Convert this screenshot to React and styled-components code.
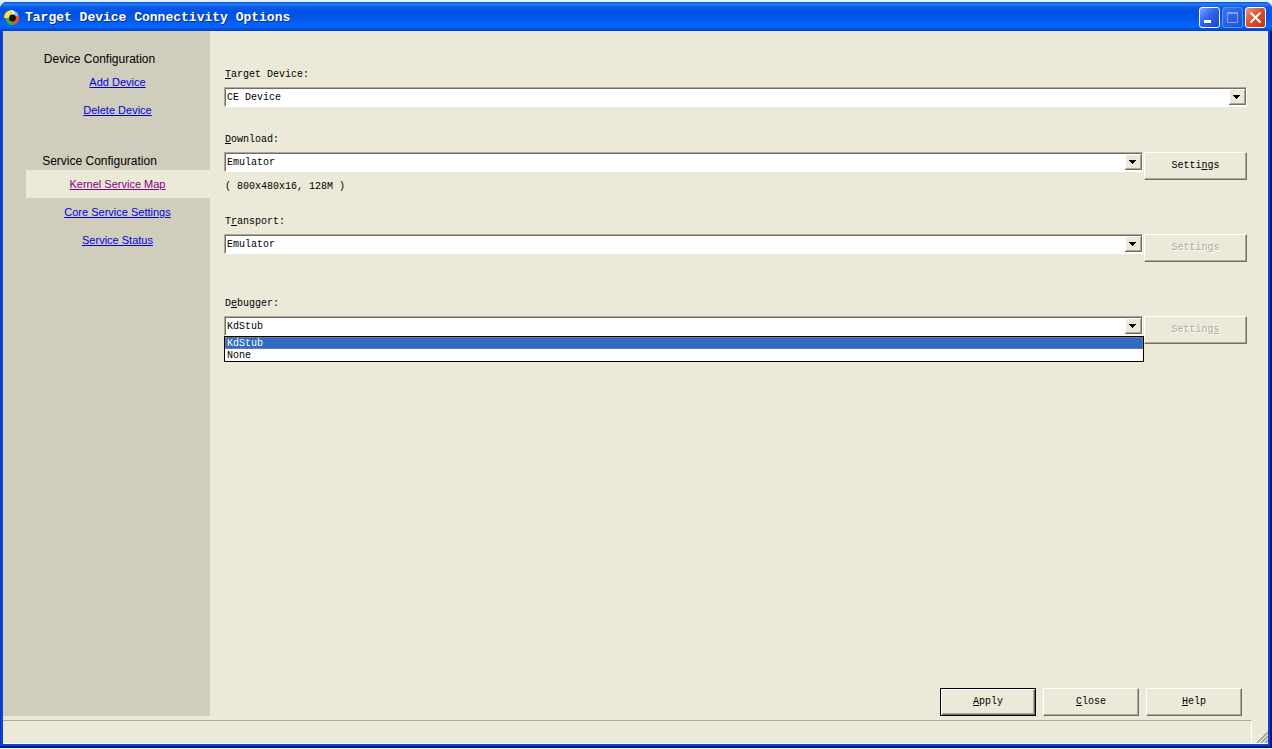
import React, { useState } from "react";
import styled, { createGlobalStyle, css } from "styled-components";

const face = "#ece9d8";
const mono = '"Liberation Mono", "DejaVu Sans Mono", monospace';
const sans = '"Liberation Sans", Arial, sans-serif';

const GlobalStyle = createGlobalStyle`
  * { box-sizing: border-box; }
  body { margin: 0; background: #dff3fb; }
`;

const Desktop = styled.div`
  display: flex;
  min-height: 100vh;
  padding: 2px 0 1px;
`;

const Window = styled.section`
  flex: 1;
  display: flex;
  flex-direction: column;
  padding: 0 4px 4px 3px;
  border-radius: 7px 7px 0 0;
  background: #0b46d6;
  box-shadow: inset -2px -2px 0 #001590, inset 1px 0 0 #0a35c4;
`;

const TitleBar = styled.header`
  display: flex;
  align-items: center;
  height: 29px;
  margin: 0 -4px 0 -3px;
  padding: 2px 6px 0 4px;
  border-radius: 7px 7px 0 0;
  background: linear-gradient(
    #0a46c8 0, #2b82f8 2px, #0a5cee 5px, #0052e2 9px,
    #0054e6 15px, #0362fc 22px, #0266ff 25px, #0450da 27px, #0340be 29px
  );
`;

const Title = styled.h1`
  flex: 1;
  margin: 0 0 0 5px;
  font: bold 13px/16px ${mono};
  color: #fff;
  text-shadow: 1px 1px 0 #0a2a80;
`;

const Caption = styled.div`
  display: flex;
  gap: 2px;
`;

const CaptionButton = styled.button`
  display: block;
  width: 21px;
  height: 21px;
  padding: 0;
  border: 1px solid ${(p) => (p.disabled ? "#5f92f0" : "#fff")};
  border-radius: 3px;
  background: ${(p) =>
    p.$danger
      ? "linear-gradient(135deg, #ec9a80, #dd5130 45%, #b93510)"
      : p.disabled
        ? "linear-gradient(135deg, #3c74ea, #1c50d8)"
        : "linear-gradient(135deg, #7da2f5, #2f66ea 45%, #1746cc)"};
  svg { display: block; }
`;

const Body = styled.div`
  flex: 1;
  display: flex;
  padding-bottom: 4px;
  background: ${face};
`;

const Sidebar = styled.nav`
  width: 207px;
  padding: 19px 0 0 23px;
  background: #d1cdbc;
  font-family: ${sans};
`;

const Group = styled.div`
  margin-bottom: 28px;
`;

const GroupTitle = styled.h2`
  margin: 0;
  padding-right: 37px;
  font-size: 12px;
  font-weight: normal;
  line-height: 18px;
  text-align: center;
`;

const NavLink = styled.a`
  display: block;
  height: 28px;
  padding-right: 1px;
  font-size: 11px;
  line-height: 28px;
  text-align: center;
  color: ${(p) => (p.$active ? "#800080" : "#0000e0")};
  background: ${(p) => (p.$active ? face : "transparent")};
`;

const Main = styled.main`
  flex: 1;
  display: flex;
  flex-direction: column;
  justify-content: space-between;
  padding: 37px 21px 0 14px;
  font: 10px/14px ${mono};
  color: #000;
`;

const Field = styled.div`
  min-height: ${(p) => (p.$compact ? 65 : 82)}px;
`;

const Label = styled.label`
  display: block;
  width: max-content;
  margin: 0 0 5px 1px;
`;

const Row = styled.div`
  display: flex;
  align-items: flex-start;
  gap: 1px;
`;

const Control = styled.div`
  position: relative;
  flex: 1;
`;

const SelectFrame = styled.div`
  display: flex;
  height: 20px;
  border: 1px solid;
  border-color: #aca899 #fff #fff #aca899;
  box-shadow: inset 1px 1px 0 #716f64;
  background: #fff;
`;

const Select = styled.select`
  flex: 1;
  appearance: none;
  padding: 2px 20px 0 2px;
  border: 0;
  outline: 0;
  background: transparent;
  font: inherit;
  color: #000;
`;

const Arrow = styled.svg`
  position: absolute;
  top: 2px;
  right: 1px;
  pointer-events: none;
`;

const Note = styled.p`
  margin: 8px 0 0 1px;
`;

const Options = styled.ul`
  position: absolute;
  top: 20px;
  left: 0;
  right: -1px;
  margin: 0;
  padding: 0;
  border: 1px solid #000;
  background: #fff;
  list-style: none;
`;

const Option = styled.li`
  height: 12px;
  padding-left: 2px;
  line-height: 14px;
  ${(p) =>
    p.$selected &&
    css`
      color: #fff;
      background: #316ac5;
      outline: 1px dotted #a89060;
      outline-offset: -1px;
    `}
`;

const PushButton = styled.button`
  width: ${(p) => (p.$wide ? 103 : 96)}px;
  height: 28px;
  padding: 0;
  border: 1px solid;
  border-color: ${(p) => (p.$primary ? "#000" : "#fff #716f64 #716f64 #fff")};
  background: ${face};
  box-shadow: ${(p) =>
    p.$primary
      ? "inset 1px 1px 0 #fff, inset -1px -1px 0 #716f64, inset -2px -2px 0 #aca899"
      : "inset -1px -1px 0 #aca899"};
  font: inherit;
  color: #000;
  &:disabled {
    color: #aca899;
    text-shadow: 1px 1px 0 #fff;
  }
`;

const Actions = styled.div`
  display: flex;
  justify-content: flex-end;
  gap: 7px;
  padding-right: 5px;
`;

const StatusBar = styled.footer`
  display: flex;
  justify-content: space-between;
  align-items: flex-end;
  height: 24px;
  border-bottom: 1px solid #fff;
  background: ${face};
`;

const StatusPane = styled.div`
  flex: 1;
  height: 23px;
  margin-right: 4px;
  border-top: 1px solid #aca899;
  border-right: 1px solid #fff;
`;

function AppIcon() {
  return (
    <svg width="16" height="16" viewBox="0 0 16 16" aria-hidden="true">
      <path d="M8 8L0 8Q0 1 7 0Z" fill="#ffe23c" />
      <path d="M8 8L7 0Q14 1 15 7Z" fill="#9cc0f4" />
      <path d="M8 8L15 5Q17 13 9 15Z" fill="#e4562c" />
      <path d="M8 8L10 15Q3 16 1 8Z" fill="#4ba548" />
      <path d="M7 0Q10 0 11 3L8 6Z" fill="#f6f5e4" />
      <circle cx="8.500" cy="8" r="3.400" fill="#171008" />
    </svg>
  );
}

function DropArrow() {
  return (
    <Arrow width="17" height="16" viewBox="0 0 17 16" aria-hidden="true" shapeRendering="crispEdges">
      <path d="M0 0H17V16H0Z" fill="#716f64" />
      <path d="M0 0H16V15H0Z" fill="#fff" />
      <path d="M1 1H16V15H1Z" fill="#aca899" />
      <path d="M1 1H15V14H1Z" fill={face} />
      <path d="M4 6H11V7H4ZM5 7H10V8H5ZM6 8H9V9H6ZM7 9H8V10H7Z" fill="#000" />
    </Arrow>
  );
}

function Mnemonic({ text, at }) {
  return (
    <>
      {text.slice(0, at)}
      <u>{text[at]}</u>
      {text.slice(at + 1)}
    </>
  );
}

function Combo({ id, label, at, options, note, settings, compact, open }) {
  const [value, setValue] = useState(options[0]);
  return (
    <Field $compact={compact}>
      <Label htmlFor={id}>
        <Mnemonic text={label} at={at} />
      </Label>
      <Row>
        <Control>
          <SelectFrame>
            <Select id={id} value={value} onChange={(e) => setValue(e.target.value)}>
              {options.map((o) => (
                <option key={o}>{o}</option>
              ))}
            </Select>
          </SelectFrame>
          <DropArrow />
          {note && <Note>{note}</Note>}
          {open && (
            <Options role="listbox" aria-label="Debugger options">
              {options.map((o) => (
                <Option
                  key={o}
                  role="option"
                  aria-selected={o === value}
                  $selected={o === value}
                  onClick={() => setValue(o)}
                >
                  {o}
                </Option>
              ))}
            </Options>
          )}
        </Control>
        {settings && (
          <PushButton type="button" $wide disabled={settings.disabled}>
            <Mnemonic text="Settings" at={settings.at} />
          </PushButton>
        )}
      </Row>
    </Field>
  );
}

export default function App() {
  return (
    <Desktop>
      <GlobalStyle />
      <Window>
        <TitleBar>
          <AppIcon />
          <Title>Target Device Connectivity Options</Title>
          <Caption>
            <CaptionButton type="button" aria-label="Minimize">
              <svg width="19" height="19">
                <path d="M4 12H11V15H4Z" fill="#fff" />
              </svg>
            </CaptionButton>
            <CaptionButton type="button" aria-label="Maximize" disabled>
              <svg width="19" height="19" fill="none" stroke="#7ea5f3">
                <path d="M4.500 4.500H14.500V14.500H4.500ZM4 5.500H15" />
              </svg>
            </CaptionButton>
            <CaptionButton type="button" aria-label="Close window" $danger>
              <svg width="19" height="19" stroke="#fff" strokeWidth="2">
                <path d="M4.500 4.500L14.500 14.500M14.500 4.500L4.500 14.500" />
              </svg>
            </CaptionButton>
          </Caption>
        </TitleBar>
        <Body>
          <Sidebar>
            <Group>
              <GroupTitle>Device Configuration</GroupTitle>
              <NavLink href="#add">Add Device</NavLink>
              <NavLink href="#delete">Delete Device</NavLink>
            </Group>
            <Group>
              <GroupTitle>Service Configuration</GroupTitle>
              <NavLink href="#kernel" $active>Kernel Service Map</NavLink>
              <NavLink href="#core">Core Service Settings</NavLink>
              <NavLink href="#status">Service Status</NavLink>
            </Group>
          </Sidebar>
          <Main>
            <form>
              <Combo id="device" label="Target Device:" at={0} options={["CE Device"]} compact />
              <Combo
                id="download"
                label="Download:"
                at={0}
                options={["Emulator"]}
                note="( 800x480x16, 128M )"
                settings={{ at: 5 }}
              />
              <Combo
                id="transport"
                label="Transport:"
                at={1}
                options={["Emulator"]}
                settings={{ at: 6, disabled: true }}
              />
              <Combo
                id="debugger"
                label="Debugger:"
                at={1}
                options={["KdStub", "None"]}
                settings={{ at: 7, disabled: true }}
                open
              />
            </form>
            <Actions>
              <PushButton type="button" $primary><Mnemonic text="Apply" at={0} /></PushButton>
              <PushButton type="button"><Mnemonic text="Close" at={0} /></PushButton>
              <PushButton type="button"><Mnemonic text="Help" at={0} /></PushButton>
            </Actions>
          </Main>
        </Body>
        <StatusBar>
          <StatusPane />
          <svg width="12" height="12" viewBox="0 0 12 12" aria-hidden="true">
            <path d="M0 11L11 0M4 11L11 4M8 11L11 8" stroke="#fff" />
            <path
              d="M1 12L12 1M5 12L12 5M9 12L12 9"
              stroke="#aca899"
              strokeWidth="2"
            />
          </svg>
        </StatusBar>
      </Window>
    </Desktop>
  );
}
